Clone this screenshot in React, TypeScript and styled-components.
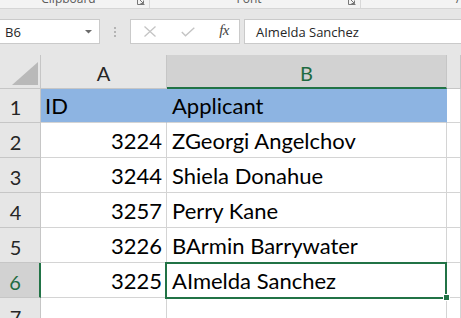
import React from "react";
import styled, { createGlobalStyle, css } from "styled-components";

const GlobalStyle = createGlobalStyle`
  html, body { margin: 0; padding: 0; background: #ffffff; overflow: hidden; }
  #root { width: 461px; height: 318px; }
`;

const Window = styled.div`
  width: 461px;
  height: 318px;
  overflow: hidden;
  display: flex;
  flex-direction: column;
  background: #ffffff;
`;

/* ---------- Ribbon (clipped group labels) ---------- */
const Ribbon = styled.div`
  height: 8px;
  flex: none;
  display: flex;
  overflow: hidden;
  background: #f3f3f3;
  border-bottom: 1px solid #d5d5d5;
`;

const RibbonGroup = styled.div<{ $w: number }>`
  width: ${(p) => p.$w}px;
  flex: none;
  display: grid;
  grid-template-columns: 1fr 12px;
  align-items: start;
  border-right: 1px solid #d8d8d8;
`;

const GroupLabel = styled.span`
  margin-top: -7px;
  text-align: center;
  font-family: "Open Sans", sans-serif;
  font-size: 12px;
  line-height: 12px;
  color: #5a5a5a;
  white-space: nowrap;
`;

const LastGroupLabel = styled(GroupLabel)`
  padding-left: 95px;
  text-align: left;
`;

const Launcher = styled.svg`
  margin-top: -3px;
  display: block;
`;

const LauncherIcon = () => (
  <Launcher width="8" height="8" viewBox="0 0 8 8">
    <path d="M0.5 0.5 V7.5 H7.5" fill="none" stroke="#777" strokeWidth="1" />
    <path d="M2.5 2.5 L6.5 6.5 M6.5 3.5 V6.5 H3.5" fill="none" stroke="#777" strokeWidth="1" />
  </Launcher>
);

/* ---------- Formula bar ---------- */
const FormulaBar = styled.div`
  flex: none;
  display: flex;
  align-items: stretch;
  padding: 10px 0 11px 0;
  background: #e6e6e6;
`;

const Box = styled.div`
  height: 25px;
  box-sizing: border-box;
  background: #ffffff;
  border: 1px solid #cacaca;
  display: flex;
  align-items: center;
`;

const NameBox = styled(Box)`
  width: 100px;
  border-left: none;
  padding: 0 7px 0 5px;
  justify-content: space-between;
`;

const BoxText = styled.span`
  font-family: "Open Sans", sans-serif;
  font-size: 13px;
  color: #262626;
  white-space: nowrap;
`;

const Grip = styled.div`
  width: 30px;
  display: flex;
  align-items: center;
  justify-content: center;
`;

const ButtonsBox = styled(Box)`
  width: 110px;
  padding: 0 10px 0 13px;
  justify-content: space-between;
`;

const Fx = styled.span`
  font-family: "Liberation Serif", serif;
  font-style: italic;
  font-size: 15px;
  color: #444444;
  letter-spacing: -0.5px;
  margin-top: -2px;
`;

const FormulaInput = styled(Box)`
  flex: 1;
  margin-left: 4px;
  border-right: none;
  padding-left: 11px;
`;

/* ---------- Sheet grid ---------- */
const Sheet = styled.div`
  flex: 1;
  display: grid;
  grid-template-columns: 41px 126px 280px 1fr;
  grid-template-rows: 34px 34px repeat(6, 35px);
  font-family: "Lato", sans-serif;
`;

const grid = "#d4d4d4";

const CellBase = styled.div`
  box-sizing: border-box;
  border-right: 1px solid ${grid};
  border-bottom: 1px solid ${grid};
  display: flex;
  align-items: flex-end;
  white-space: nowrap;
  overflow: visible;
  position: relative;
`;

const Corner = styled(CellBase)`
  background: #e6e6e6;
  border-right-color: #c6c6c6;
  border-bottom-color: #c6c6c6;
  justify-content: flex-end;
  padding: 0 2px 3px 0;
`;

const ColHeader = styled(CellBase)<{ $selected?: boolean }>`
  justify-content: center;
  font-size: 20px;
  line-height: 24px;
  padding-bottom: 3px;
  background: #e6e6e6;
  color: #262626;
  border-right-color: #c6c6c6;
  border-bottom-color: #c6c6c6;
  ${(p) =>
    p.$selected &&
    css`
      background: #d2d2d2;
      color: #1e6b41;
      border-bottom: 2px solid #217346;
      padding-bottom: 2px;
    `}
`;

const RowHeader = styled(CellBase)<{ $selected?: boolean }>`
  justify-content: center;
  padding: 0 9px 3px 0;
  font-size: 20px;
  line-height: 24px;
  background: #e6e6e6;
  color: #262626;
  border-right-color: #c6c6c6;
  border-bottom-color: #c6c6c6;
  ${(p) =>
    p.$selected &&
    css`
      background: #d2d2d2;
      color: #1e6b41;
      border-right: 2px solid #217346;
    `}
`;

const Cell = styled(CellBase)<{ $num?: boolean; $fill?: boolean; $active?: boolean }>`
  font-size: 22px;
  line-height: 26px;
  padding: 0 4px 3px 4px;
  color: #000000;
  justify-content: ${(p) => (p.$num ? "flex-end" : "flex-start")};
  ${(p) =>
    p.$fill &&
    css`
      background: #8db4e2;
      border-right-color: #8db4e2;
    `}
  ${(p) =>
    p.$active &&
    css`
      z-index: 2;
      &::after {
        content: "";
        position: absolute;
        top: -1px;
        left: -2px;
        right: -1px;
        bottom: -2px;
        border: 2px solid #217346;
        pointer-events: none;
      }
      &::before {
        content: "";
        position: absolute;
        right: -4px;
        bottom: -4px;
        width: 5px;
        height: 5px;
        background: #217346;
        border: 1px solid #ffffff;
        z-index: 3;
      }
    `}
`;

const TextCell = styled(Cell)`
  padding-left: 5px;
`;

const rows = [
  { id: "3224", name: "ZGeorgi Angelchov" },
  { id: "3244", name: "Shiela Donahue" },
  { id: "3257", name: "Perry Kane" },
  { id: "3226", name: "BArmin Barrywater" },
  { id: "3225", name: "AImelda Sanchez" },
];

export default function App() {
  return (
    <Window>
      <GlobalStyle />
      <Ribbon>
        <RibbonGroup $w={149}>
          <GroupLabel>Clipboard</GroupLabel>
          <LauncherIcon />
        </RibbonGroup>
        <RibbonGroup $w={210}>
          <GroupLabel>Font</GroupLabel>
          <LauncherIcon />
        </RibbonGroup>
        <LastGroupLabel>Alignment</LastGroupLabel>
      </Ribbon>

      <FormulaBar>
        <NameBox>
          <BoxText>B6</BoxText>
          <svg width="7" height="4" viewBox="0 0 7 4">
            <polygon points="0,0 7,0 3.5,3.5" fill="#6b6b6b" />
          </svg>
        </NameBox>
        <Grip>
          <svg width="2" height="10" viewBox="0 0 2 10">
            <rect x="0" y="0" width="2" height="2" fill="#b4b4b4" />
            <rect x="0" y="4" width="2" height="2" fill="#b4b4b4" />
            <rect x="0" y="8" width="2" height="2" fill="#b4b4b4" />
          </svg>
        </Grip>
        <ButtonsBox>
          <svg width="12" height="11" viewBox="0 0 12 11">
            <path d="M0.5 0.5 L11.5 10.5 M11.5 0.5 L0.5 10.5" stroke="#c4c4c4" strokeWidth="1.3" fill="none" />
          </svg>
          <svg width="14" height="10" viewBox="0 0 14 10">
            <path d="M0.8 5 L4.5 8.8 L13.3 0.8" stroke="#c4c4c4" strokeWidth="1.4" fill="none" />
          </svg>
          <Fx>fx</Fx>
        </ButtonsBox>
        <FormulaInput>
          <BoxText>AImelda Sanchez</BoxText>
        </FormulaInput>
      </FormulaBar>

      <Sheet>
        <Corner>
          <svg width="26" height="23" viewBox="0 0 26 23">
            <polygon points="26,0 26,23 0,23" fill="#b9b9b9" />
          </svg>
        </Corner>
        <ColHeader>A</ColHeader>
        <ColHeader $selected>B</ColHeader>
        <ColHeader />

        <RowHeader>1</RowHeader>
        <Cell $fill>ID</Cell>
        <TextCell $fill>Applicant</TextCell>
        <Cell />

        {rows.map((r, i) => {
          const active = i === rows.length - 1;
          return (
            <React.Fragment key={r.id}>
              <RowHeader $selected={active}>{i + 2}</RowHeader>
              <Cell $num>{r.id}</Cell>
              <TextCell $active={active}>{r.name}</TextCell>
              <Cell />
            </React.Fragment>
          );
        })}

        <RowHeader>7</RowHeader>
        <Cell />
        <TextCell />
        <Cell />
      </Sheet>
    </Window>
  );
}
